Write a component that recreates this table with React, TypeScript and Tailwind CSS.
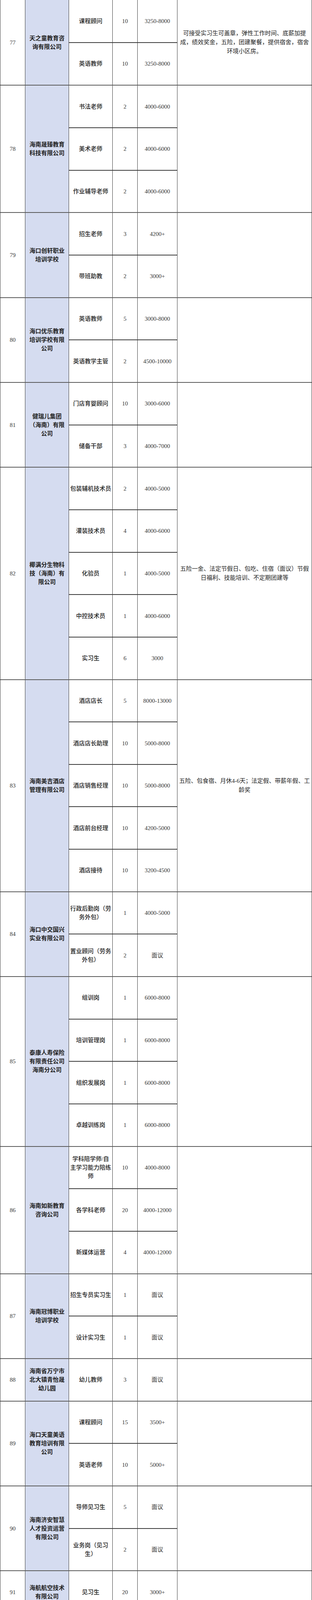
import React from "react";

type Job = { pos: string[]; count: string; salary: string };
type Block = { no: string; company: string[]; jobs: Job[]; benefits?: string[] };

const j = (pos: string | string[], count: string, salary: string): Job => ({
  pos: Array.isArray(pos) ? pos : [pos],
  count,
  salary,
});

const ROW = 108.66;

const data: Block[] = [
  {
    no: "77",
    company: ["天之童教育咨", "询有限公司"],
    jobs: [j("课程顾问", "10", "3250-8000"), j("英语教师", "10", "3250-8000")],
    benefits: [
      "可接受实习生可盖章，弹性工作时间、底薪加提",
      "成，绩效奖金，五险，团建聚餐，提供宿舍，宿舍",
      "环境小区房。",
    ],
  },
  {
    no: "78",
    company: ["海南晟臻教育", "科技有限公司"],
    jobs: [
      j("书法老师", "2", "4000-6000"),
      j("美术老师", "2", "4000-6000"),
      j("作业辅导老师", "2", "4000-6000"),
    ],
  },
  {
    no: "79",
    company: ["海口创轩职业", "培训学校"],
    jobs: [j("招生老师", "3", "4200+"), j("带班助教", "2", "3000+")],
  },
  {
    no: "80",
    company: ["海口优乐教育", "培训学校有限", "公司"],
    jobs: [j("英语教师", "5", "3000-8000"), j("英语教学主管", "2", "4500-10000")],
  },
  {
    no: "81",
    company: ["健瑞儿集团", "（海南）有限", "公司"],
    jobs: [j("门店育婴顾问", "10", "3000-6000"), j("储备干部", "3", "4000-7000")],
  },
  {
    no: "82",
    company: ["椰满分生物科", "技（海南）有", "限公司"],
    jobs: [
      j("包装辅机技术员", "2", "4000-5000"),
      j("灌装技术员", "4", "4000-6000"),
      j("化验员", "1", "4000-5000"),
      j("中控技术员", "1", "4000-6000"),
      j("实习生", "6", "3000"),
    ],
    benefits: ["五险一金、法定节假日、包吃、住宿（面议）节假", "日福利、技能培训、不定期团建等"],
  },
  {
    no: "83",
    company: ["海南美吉酒店", "管理有限公司"],
    jobs: [
      j("酒店店长", "5", "8000-13000"),
      j("酒店店长助理", "10", "5000-8000"),
      j("酒店销售经理", "10", "5000-8000"),
      j("酒店前台经理", "10", "4200-5000"),
      j("酒店接待", "10", "3200-4500"),
    ],
    benefits: ["五险、包食宿、月休4-6天；法定假、带薪年假、工", "龄奖"],
  },
  {
    no: "84",
    company: ["海口中交国兴", "实业有限公司"],
    jobs: [
      j(["行政后勤岗（劳", "务外包）"], "1", "4000-5000"),
      j(["置业顾问（劳务", "外包）"], "2", "面议"),
    ],
  },
  {
    no: "85",
    company: ["泰康人寿保险", "有限责任公司", "海南分公司"],
    jobs: [
      j("组训岗", "1", "6000-8000"),
      j("培训管理岗", "1", "6000-8000"),
      j("组织发展岗", "1", "6000-8000"),
      j("卓越训练岗", "1", "6000-8000"),
    ],
  },
  {
    no: "86",
    company: ["海南如新教育", "咨询公司"],
    jobs: [
      j(["学科陪学师/自", "主学习能力陪练", "师"], "10", "4000-8000"),
      j("各学科老师", "20", "4000-12000"),
      j("新媒体运营", "4", "4000-12000"),
    ],
  },
  {
    no: "87",
    company: ["海南冠博职业", "培训学校"],
    jobs: [j("招生专员实习生", "1", "面议"), j("设计实习生", "1", "面议")],
  },
  {
    no: "88",
    company: ["海南省万宁市", "北大镇青怡晟", "幼儿园"],
    jobs: [j("幼儿教师", "3", "面议")],
  },
  {
    no: "89",
    company: ["海口天童美语", "教育培训有限", "公司"],
    jobs: [j("课程顾问", "15", "3500+"), j("英语老师", "10", "5000+")],
  },
  {
    no: "90",
    company: ["海南济安智慧", "人才投资运营", "有限公司"],
    jobs: [j("导师见习生", "5", "面议"), j(["业务岗（见习", "生）"], "2", "面议")],
  },
  {
    no: "91",
    company: ["海航航空技术", "有限公司"],
    jobs: [j("见习生", "20", "3000+")],
  },
  {
    no: "92",
    company: ["海南米星科技", "有限公司"],
    jobs: [
      j("校区店长", "5", "5000-10000"),
      j("招商专员", "3", "5000-8000"),
      j("教学主管", "1", "面议"),
      j("督学师", "10", "4000-6000"),
      j(["教育行业合伙人", "、校长、店长"], "10", "面议"),
    ],
  },
  {
    no: "93",
    company: ["兴墨教育培训", "中心有限公司"],
    jobs: [
      j("书法教师", "5", "3000-6000"),
      j("美术教师", "5", "3000-6000"),
      j("口才教师", "5", "3000-6000"),
      j("助教老师", "5", "3000-6000"),
      j("文员", "5", "3000-6000"),
      j("全科老师", "5", "3000-6000"),
      j("暑假兼职老师", "5", "3000-6000"),
    ],
  },
];

function Lines({ lines }: { lines: string[] }) {
  return (
    <div className="flex flex-col items-center">
      {lines.map((l, i) => (
        <span key={i} className="whitespace-nowrap">
          {l}
        </span>
      ))}
    </div>
  );
}

export default function App() {
  return (
    <div className="w-[800px] bg-white border-x border-[#3a3a3a] text-[#222] text-[15px] leading-[22px] font-['Liberation_Serif','Noto_Sans_CJK_SC',serif]">
      {data.map((b, bi) => (
        <div
          key={b.no}
          className={
            bi > 0
              ? "flex box-border border-t-2 border-[#5a5a5a]"
              : "flex box-border"
          }
          style={{ height: b.jobs.length * ROW }}
        >
          <div className="w-[64px] shrink-0 border-r border-[#3a3a3a] flex items-center justify-center text-[#333]">
            {b.no}
          </div>
          <div className="w-[112px] shrink-0 border-r border-[#3a3a3a] bg-[#d5dcf0] flex items-center justify-center text-center font-bold text-[#222]">
            <Lines lines={b.company} />
          </div>
          <div className="w-[278px] shrink-0 flex flex-col">
            {b.jobs.map((jb, ji) => (
              <div
                key={ji}
                className={
                  ji > 0
                    ? "flex-1 flex border-t-2 border-[#3a3a3a]"
                    : "flex-1 flex"
                }
              >
                <div className="w-[112px] shrink-0 border-r border-[#3a3a3a] flex items-center justify-center text-center font-medium">
                  <Lines lines={jb.pos} />
                </div>
                <div className="w-[64px] shrink-0 border-r border-[#3a3a3a] flex items-center justify-center text-[#333]">
                  {jb.count}
                </div>
                <div className="w-[102px] shrink-0 border-r border-[#3a3a3a] flex items-center justify-center text-[#333]">
                  {jb.salary}
                </div>
              </div>
            ))}
          </div>
          <div className="flex-1 flex items-center justify-center text-center leading-[23px] text-[#222]">
            {b.benefits ? <Lines lines={b.benefits} /> : null}
          </div>
        </div>
      ))}
    </div>
  );
}
